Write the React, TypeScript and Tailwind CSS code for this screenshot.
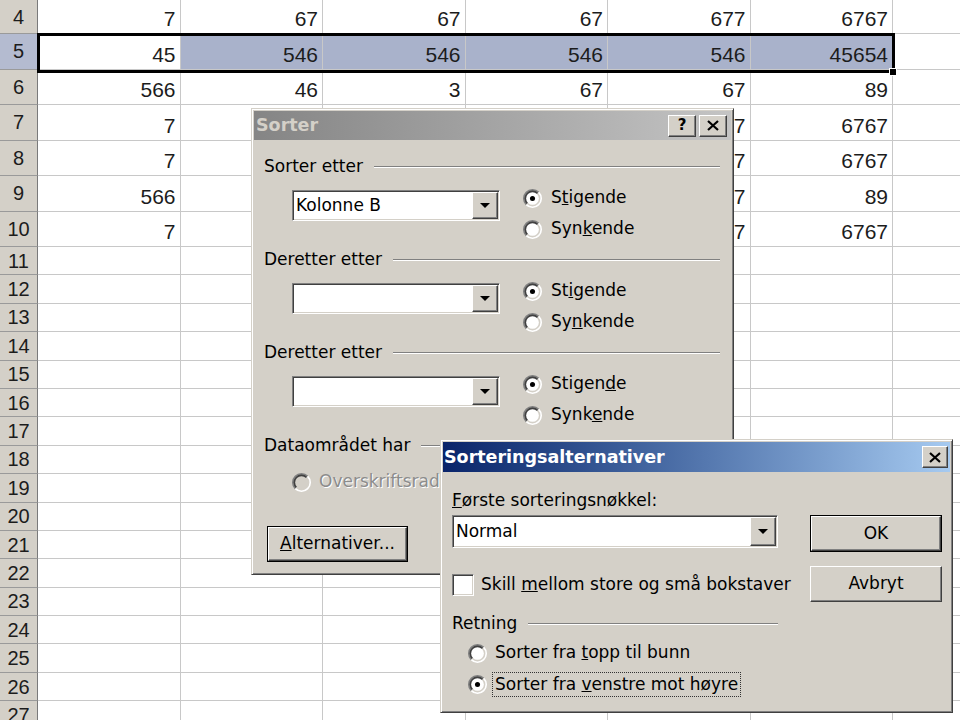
import React from 'react'

type Row = { n: number; h: string; v: string[] }

const tall = 'h-[35.5px]'
const short = 'h-[28.4px]'
const a = ['7', '67', '67', '67', '677', '6767']
const b = ['566', '46', '3', '67', '67', '89']

const rows: Row[] = [
  { n: 4, h: 'h-[34px]', v: a },
  { n: 5, h: tall, v: ['45', '546', '546', '546', '546', '45654'] },
  { n: 6, h: tall, v: b },
  { n: 7, h: tall, v: a },
  { n: 8, h: tall, v: a },
  { n: 9, h: tall, v: b },
  { n: 10, h: tall, v: a },
  ...Array.from({ length: 17 }, (_, i) => ({ n: 11 + i, h: short, v: [] as string[] })),
]

// classic win32 bevels
const raised =
  'border border-t-white border-l-white border-r-[#404040] border-b-[#404040] shadow-[inset_-1px_-1px_0_#808080,inset_1px_1px_0_#d4d0c8] bg-[#d4d0c8]'
const sunken =
  'border border-t-[#808080] border-l-[#808080] border-r-white border-b-white shadow-[inset_1px_1px_0_#404040,inset_-1px_-1px_0_#d4d0c8]'
const frame =
  'border border-t-[#d4d0c8] border-l-[#d4d0c8] border-r-[#404040] border-b-[#404040] shadow-[inset_1px_1px_0_#fff,inset_-1px_-1px_0_#808080] p-[2px] bg-[#d4d0c8]'

function Radio({ checked, disabled }: { checked?: boolean; disabled?: boolean }) {
  return (
    <svg width="19" height="19" viewBox="0 0 12 12" className="shrink-0">
      <path d="M1.757 10.243A6 6 0 0 1 10.243 1.757Z" fill="#808080" />
      <path d="M10.243 1.757A6 6 0 0 1 1.757 10.243Z" fill="#fff" />
      <path d="M2.464 9.536A5 5 0 0 1 9.536 2.464Z" fill="#404040" />
      <path d="M9.536 2.464A5 5 0 0 1 2.464 9.536Z" fill="#d4d0c8" />
      <circle cx="6" cy="6" r="4" fill={disabled ? '#d4d0c8' : '#fff'} />
      {checked && <circle cx="6" cy="6" r="1.6" fill="#000" />}
    </svg>
  )
}

function Combo({ text, w, h }: { text?: string; w: string; h: string }) {
  return (
    <div className={`${w} ${h} ${sunken} bg-white flex p-[1px]`}>
      <div className="flex-1 pl-[2px] flex items-center whitespace-nowrap">{text}</div>
      <div className={`w-[26px] ${raised} flex items-center justify-center`}>
        <svg width="10" height="5" viewBox="0 0 10 5">
          <path d="M0 0h10L5 5z" fill="#000" />
        </svg>
      </div>
    </div>
  )
}

function Group({ children }: { children: React.ReactNode }) {
  return (
    <div className="flex items-center h-5 whitespace-nowrap">
      <span>{children}</span>
      <div className="ml-[11px] flex-1 border-t border-t-[#808080] border-b border-b-white" />
    </div>
  )
}

function RadioRow({ checked, children }: { checked?: boolean; children: React.ReactNode }) {
  return (
    <div className="flex items-center h-5 gap-[9px] whitespace-nowrap">
      <Radio checked={checked} />
      <span>{children}</span>
    </div>
  )
}

function SortBlock({ label, text, up, down }: { label: string; text?: string; up: React.ReactNode; down: React.ReactNode }) {
  return (
    <>
      <div className="mt-[11px]">
        <Group>{label}</Group>
      </div>
      <div className="flex mt-[11px]">
        <div className="ml-[28px] mt-[2px]">
          <Combo text={text} w="w-[208px]" h="h-[31px]" />
        </div>
        <div className="ml-[23px] flex flex-col gap-[11px]">
          <RadioRow checked>{up}</RadioRow>
          <RadioRow>{down}</RadioRow>
        </div>
      </div>
    </>
  )
}

function CloseGlyph() {
  return (
    <svg width="12" height="11" viewBox="0 0 12 11">
      <path d="M1 1l10 9M11 1L1 10" stroke="#000" strokeWidth="2.2" />
    </svg>
  )
}

function SorterDialog() {
  return (
    <div className={`absolute left-[251px] top-[108px] w-[483px] h-[467px] ${frame} text-[17px] text-black`}>
      <div className="h-[29px] flex items-center justify-between pl-[2px] pr-[4px] bg-linear-to-r from-[#858585] to-[#c4c4c4]">
        <span className="font-bold text-[17.5px] text-[#d4d0c8]">Sorter</span>
        <div className="flex gap-[3px]">
          <div className={`w-[28px] h-[22px] ${raised} flex items-center justify-center font-bold text-[15px] leading-none`}>?</div>
          <div className={`w-[28px] h-[22px] ${raised} flex items-center justify-center`}>
            <CloseGlyph />
          </div>
        </div>
      </div>
      <div className="pl-[10px] pr-[11px] pt-[6px]">
        <SortBlock
          label="Sorter etter"
          text="Kolonne B"
          up={<>S<u>t</u>igende</>}
          down={<>Syn<u>k</u>ende</>}
        />
        <SortBlock
          label="Deretter etter"
          up={<>St<u>i</u>gende</>}
          down={<>Sy<u>n</u>kende</>}
        />
        <SortBlock
          label="Deretter etter"
          up={<>Stigen<u>d</u>e</>}
          down={<>Synk<u>e</u>nde</>}
        />
        <div className="mt-[11px]">
          <Group>Dataområdet har</Group>
        </div>
        <div className="mt-[16px] ml-[28px] flex items-center h-5 gap-[8px] whitespace-nowrap text-[#8c8c8c] [text-shadow:1px_1px_0_#fff]">
          <Radio disabled />
          <span>Overskriftsrad</span>
        </div>
        <div className="mt-[34px] ml-[3px] w-[141px] h-[36px] border border-black">
          <div className={`h-full ${raised} flex items-center justify-center whitespace-nowrap`}>
            <span>
              <u>A</u>lternativer...
            </span>
          </div>
        </div>
      </div>
    </div>
  )
}

function OptionsDialog() {
  return (
    <div className={`absolute left-[440px] top-[439px] w-[513px] h-[274px] ${frame} text-[17px] text-black`}>
      <div className="h-[30px] flex items-center justify-between pl-[1px] pr-[2px] bg-linear-to-r from-[#0a246a] to-[#a6caf0]">
        <span className="font-bold text-[17.5px] text-white">Sorteringsalternativer</span>
        <div className={`w-[26px] h-[22px] ${raised} flex items-center justify-center`}>
          <CloseGlyph />
        </div>
      </div>
      <div className="flex pl-[9px]">
        <div className="w-[326px]">
          <div className="mt-[19px] h-5 flex items-center whitespace-nowrap">
            <span>
              <u>F</u>ørste sorteringsnøkkel:
            </span>
          </div>
          <div className="mt-[4px]">
            <Combo text="Normal" w="w-[326px]" h="h-[33px]" />
          </div>
          <div className="mt-[26px] h-[22px] flex items-center gap-[7px] whitespace-nowrap">
            <div className={`w-[22px] h-[22px] shrink-0 ${sunken} bg-white`} />
            <span>
              Skill <u>m</u>ellom store og små bokstaver
            </span>
          </div>
          <div className="mt-[18px]">
            <Group>Retning</Group>
          </div>
          <div className="mt-[9px] ml-[16px] flex items-center h-5 gap-[8px] whitespace-nowrap">
            <Radio />
            <span>
              Sorter fra <u>t</u>opp til bunn
            </span>
          </div>
          <div className="mt-[9px] ml-[16px] flex items-center h-[25px] gap-[5px] whitespace-nowrap">
            <Radio checked />
            <span className="border border-dotted border-[#333] px-[2px] leading-[23px]">
              Sorter fra <u>v</u>enstre mot høyre
            </span>
          </div>
        </div>
        <div className="ml-[32px] mt-[43px] flex flex-col gap-[14px]">
          <div className="w-[132px] h-[37px] border border-black">
            <div className={`h-full ${raised} flex items-center justify-center`}>OK</div>
          </div>
          <div className={`w-[132px] h-[36px] ${raised} flex items-center justify-center`}>Avbryt</div>
        </div>
      </div>
    </div>
  )
}

export default function App() {
  return (
    <div className="relative w-[960px] h-[720px] overflow-hidden bg-white font-['DejaVu_Sans',sans-serif]">
      {/* sheet */}
      <div className="flex flex-col font-['Liberation_Sans',Arial,sans-serif] text-[#1c1c1c]">
        {rows.map(r => {
          const sel = r.n === 5
          return (
            <div key={r.n} className={`flex ${r.h} shrink-0`}>
              <div
                className={`w-[38px] shrink-0 border-r border-r-[#7a7a7a] border-b border-b-[#9a9a9a] flex items-center justify-center text-[20px] ${
                  sel ? 'bg-[#b4bbd0]' : 'bg-[#d4d0c8]'
                }`}
              >
                {r.n}
              </div>
              {Array.from({ length: 7 }, (_, c) => (
                <div
                  key={c}
                  className={`w-[142.5px] shrink-0 border-r border-b border-[#c8c8c8] flex items-end justify-end pr-[4px] pb-[4px] text-[21px] leading-none ${
                    sel && c > 0 && c < 6 ? 'bg-[#a9b2cb]' : ''
                  }`}
                >
                  {r.v[c] ?? ''}
                </div>
              ))}
            </div>
          )
        })}
      </div>
      {/* selection A5:F5 */}
      <div className="absolute left-[37px] top-[33px] w-[858px] h-[40px] border-[3px] border-black" />
      <div className="absolute left-[889px] top-[68px] w-[8px] h-[8px] bg-black border border-white" />

      <SorterDialog />
      <OptionsDialog />
    </div>
  )
}
